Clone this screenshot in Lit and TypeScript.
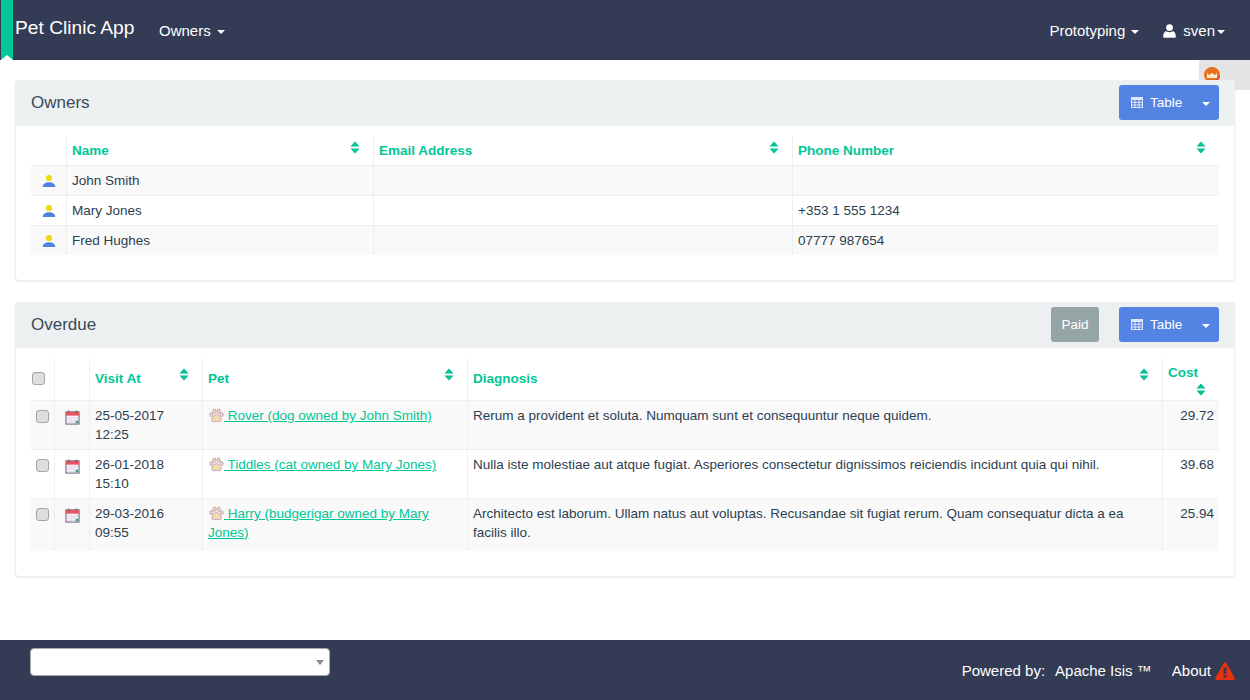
import { LitElement, html, css, svg } from "lit";
import { customElement } from "lit/decorators.js";

const sort = svg`<svg class="sort" width="10" height="14" viewBox="0 0 10 14"><path d="M5 0.5 9.5 5.6H.5Z M.5 7.4H9.5L5 12.5Z" fill="#00b98d"/><path d="M5 1.5 8 5H2Z M2 8H8L5 11.5Z" fill="#02c796"/></svg>`;
const person = html`<svg width="14" height="14" viewBox="0 0 14 14"><circle cx="7" cy="4" r="3.1" fill="#f0d90c"/><path d="M.8 13C.8 9.8 3.5 8.3 7 8.3S13.2 9.8 13.2 13Z" fill="#4f82e3"/></svg>`;
const cal = html`<svg width="15" height="15" viewBox="0 0 16 16"><rect x="1" y="2" width="14" height="13" fill="#f7f0f7" stroke="#5a5a6a"/><rect x="1" y="2" width="14" height="4" fill="#e8555f"/><rect x="3.5" y="0.5" width="1" height="3" fill="#5a5a6a"/><rect x="11.5" y="0.5" width="1" height="3" fill="#5a5a6a"/><path d="M3 8h2v1H3zM6 8h2v1H6zM9 8h2v1H9zM12 8h2v1h-2zM3 10.5h2v1H3zM6 10.5h2v1H6zM9 10.5h2v1H9zM3 13h2v1H3zM6 13h2v1H6zM9 13h2v1H9z" fill="#d9c4de"/><rect x="11.5" y="11.5" width="2.5" height="2.5" fill="#16a37f"/></svg>`;
const paw = html`<svg class="paw" width="15" height="15" viewBox="0 0 15 15"><g fill="#f2dfa8" stroke="#c5a0c0" stroke-width="1"><ellipse cx="2.3" cy="6.6" rx="1.5" ry="2"/><ellipse cx="5.4" cy="3.2" rx="1.6" ry="2.2"/><ellipse cx="9.6" cy="3.2" rx="1.6" ry="2.2"/><ellipse cx="12.7" cy="6.6" rx="1.5" ry="2"/><path d="M7.5 6.6C5.2 6.6 3.2 9.7 2.8 11.6 2.5 13.3 4 14 5.2 13.6 6.5 13.2 8.5 13.2 9.8 13.6 11 14 12.5 13.3 12.2 11.6 11.8 9.7 9.8 6.6 7.5 6.6Z"/></g></svg>`;
const tableIcon = html`<svg width="12" height="11" viewBox="0 0 12 11"><path fill-rule="evenodd" fill="#dfe8fb" d="M0 0H12V11H0ZM1 3V4.8H3.5V3ZM4.5 3V4.8H7.5V3ZM8.5 3V4.8H11V3ZM1 5.8V7.5H3.5V5.8ZM4.5 5.8V7.5H7.5V5.8ZM8.5 5.8V7.5H11V5.8ZM1 8.5V10H3.5V8.5ZM4.5 8.5V10H7.5V8.5ZM8.5 8.5V10H11V8.5Z"/></svg>`;

const visits = [
  ["25-05-2017", "12:25", "Rover (dog owned by John Smith)", "Rerum a provident et soluta. Numquam sunt et consequuntur neque quidem.", "29.72"],
  ["26-01-2018", "15:10", "Tiddles (cat owned by Mary Jones)", "Nulla iste molestiae aut atque fugiat. Asperiores consectetur dignissimos reiciendis incidunt quia qui nihil.", "39.68"],
  ["29-03-2016", "09:55", "Harry (budgerigar owned by Mary Jones)", "Architecto est laborum. Ullam natus aut voluptas. Recusandae sit fugiat rerum. Quam consequatur dicta a ea facilis illo.", "25.94"],
];
const owners = [["John Smith", ""], ["Mary Jones", "+353 1 555 1234"], ["Fred Hughes", "07777 987654"]];

@customElement("app-root")
export class AppRoot extends LitElement {
  static styles = css`
    :host { display: flex; flex-direction: column; height: 700px; font-family: "Liberation Sans", Arial, sans-serif; font-size: 13.5px; line-height: 20px; color: #2c3e50; background: #fff; position: relative; overflow: hidden; }
    .nav { height: 60px; flex: none; background: #343b55; color: #fff; display: flex; align-items: center; position: relative; padding: 0 25px 0 15px; }
    .ribbon { position: absolute; left: 1px; top: 0; width: 12px; height: 60px; background: #00c796; }
    .ribbon::after { content: ""; position: absolute; left: 0; bottom: 0; border: 6px solid transparent; border-top-width: 0; border-bottom: 5px solid #fff; }
    .brand { font-size: 19.2px; line-height: 24px; margin-top: -4px; width: 144px; flex: none; }
    .navlink { font-size: 15px; display: flex; align-items: center; margin-top: 2px; }
    .caret { display: inline-block; border-top: 4px solid currentColor; border-left: 4px solid transparent; border-right: 4px solid transparent; margin-left: 6px; margin-top: 2px; }
    .spacer { flex: 1; }
    .user { margin-left: 24px; gap: 7px; }
    .user .caret { margin-left: -5px; }
    .flag { position: absolute; right: 0; top: 60px; width: 51px; height: 30px; background: #e4e4e4; }
    .flag svg { position: absolute; left: 5px; top: 7px; }
    main { flex: 1; padding: 20px 15px 0; position: relative; }
    .panel { background: #fff; border: 1px solid #ecf0f1; border-radius: 4px; box-shadow: 0 1px 2px rgba(0,0,0,.08); margin-bottom: 21px; position: relative; padding-bottom: 25px; }
    .head { height: 46px; box-sizing: border-box; background: #ecf0f1; display: flex; align-items: center; justify-content: flex-end; padding: 0 16px 1px; margin: -1px -1px 0; border-radius: 4px 4px 0 0; gap: 20px; }
    .title { flex: 1; font-size: 17px; color: #3a4a5a; }
    .btn { height: 35px; border-radius: 3px; color: #fff; display: flex; align-items: center; font-size: 13.5px; }
    .paid { background: #95a5a6; width: 48px; justify-content: center; font-weight: normal; }
    .tb { background: #5383e3; width: 100px; padding-left: 12px; box-sizing: border-box; gap: 7px; }
    .tb .caret { margin-left: 13px; }
    .body { padding: 10px 15px 0; }
    table { border-collapse: collapse; table-layout: fixed; width: 1188px; }
    th { color: #00c796; font-weight: bold; text-align: left; padding: 5px 5px 4px 5.5px; vertical-align: bottom; border-left: 1px solid #ecf0f1; border-bottom: 1px solid #ecf0f1; position: relative; }
    td { padding: 5px 5px 4px 5.5px; vertical-align: top; border-left: 1px solid #ecf0f1; border-top: 1px solid #ecf0f1; }
    th:first-child, td:first-child { border-left: none; }
    tbody tr:nth-child(odd) td { background: #f9f9f9; }
    tbody tr:nth-child(even) td { background: #fff; }
    .owners th { height: 20px; }
    .owners td { height: 20px; }
    .sort { position: absolute; right: 13px; top: 5px; }
    .icon { text-align: center; }
    .owners td.icon { padding: 8px 0 0 1px; }
    .icon svg { display: block; margin: 0 auto; }
    .overdue th { padding-top: 11px; padding-bottom: 11px; vertical-align: top; }
    .overdue th .sort { top: 10px; }
    .overdue .cost { padding-top: 5px; padding-bottom: 1px; }
    .overdue .cost .sort { position: static; display: block; margin: 0 8px 0 auto; }
    .overdue td { padding: 5px 5px 5px 5.5px; line-height: 19px; }
    .overdue td.pet { padding-bottom: 9px; }
    .num { text-align: right; }
    a { color: #00c796; text-decoration: underline; }
    .paw { vertical-align: -3px; margin-left: 1px; }
    .check { width: 13px; height: 13px; box-sizing: border-box; background: #dedede; border: 1px solid #a5a5a5; border-radius: 3px; display: block; margin: 0 auto; }
    .overdue th.checkcell { padding: 14px 0 0 1px; }
    .overdue th.checkcell .check { margin: 0; }
    .overdue td.checkcell { padding: 9px 0 0; }
    .overdue td.calcell { padding: 9px 0 0 1px; text-align: center; }
    .calcell svg { display: block; margin: 0 auto; }
    footer { height: 60px; flex: none; background: #343b55; color: #fff; display: flex; align-items: center; padding: 0 15px 0 30px; }
    .select { width: 300px; height: 28px; box-sizing: border-box; background: #fff; border: 1px solid #aaa; border-radius: 4px; position: relative; margin-top: -16px; }
    .select::after { content: ""; position: absolute; right: 5px; top: 11px; border-top: 5px solid #888; border-left: 4px solid transparent; border-right: 4px solid transparent; }
    .foot { font-size: 15px; display: flex; align-items: center; margin-top: 2px; }
    .foot span { white-space: pre; }
    .isis { margin-left: 10px; }
    .about { margin-left: 20px; margin-right: 4px; }
  `;

  render() {
    return html`
      <header class="nav">
        <div class="ribbon"></div>
        <div class="brand">Pet Clinic App</div>
        <div class="navlink">Owners<i class="caret"></i></div>
        <div class="spacer"></div>
        <div class="navlink">Prototyping<i class="caret"></i></div>
        <div class="navlink user">
          <svg width="13" height="14" viewBox="0 0 13 14"><circle cx="6.5" cy="3.6" r="3.4" fill="#fff"/><path d="M1 13.8Q.2 13.8.2 12.4C.2 9.3 1.5 7.3 3.4 7.3Q6.5 9.3 9.6 7.3C11.5 7.3 12.8 9.3 12.8 12.4Q12.8 13.8 12 13.8Z" fill="#fff"/></svg>
          sven<i class="caret"></i>
        </div>
      </header>
      <div class="flag"><svg width="16" height="16" viewBox="0 0 16 16"><circle cx="8" cy="8" r="8" fill="#e9701f"/><path d="M8 16A8 8 0 0 0 16 8L12 12Z" fill="#e0443a"/><path d="M3 6 5 8 8 6 11 8 13 6V11H3Z" fill="#fbe9d0"/></svg></div>
      <main>
        <section class="panel">
          <div class="head"><div class="title">Owners</div>
            <div class="btn tb">${tableIcon}Table<i class="caret"></i></div></div>
          <div class="body">
            <table class="owners">
              <colgroup><col style="width:35px"/><col style="width:307px"/><col style="width:419px"/><col/></colgroup>
              <thead><tr><th></th><th>Name${sort}</th><th>Email Address${sort}</th><th>Phone Number${sort}</th></tr></thead>
              <tbody>${owners.map(o => html`<tr><td class="icon">${person}</td><td>${o[0]}</td><td></td><td>${o[1]}</td></tr>`)}</tbody>
            </table>
          </div>
        </section>
        <section class="panel">
          <div class="head"><div class="title">Overdue</div>
            <div class="btn paid">Paid</div>
            <div class="btn tb">${tableIcon}Table<i class="caret"></i></div></div>
          <div class="body">
            <table class="overdue">
              <colgroup><col style="width:23px"/><col style="width:35px"/><col style="width:113px"/><col style="width:265px"/><col style="width:695px"/><col/></colgroup>
              <thead><tr><th class="checkcell"><i class="check"></i></th><th></th><th>Visit At${sort}</th><th>Pet${sort}</th><th>Diagnosis${sort}</th><th class="cost">Cost${sort}</th></tr></thead>
              <tbody>${visits.map(v => html`<tr>
                <td class="checkcell"><i class="check"></i></td>
                <td class="calcell">${cal}</td>
                <td>${v[0]}<br/>${v[1]}</td>
                <td class="pet"><a href="#">${paw} ${v[2]}</a></td>
                <td>${v[3]}</td>
                <td class="num">${v[4]}</td>
              </tr>`)}</tbody>
            </table>
          </div>
        </section>
      </main>
      <footer>
        <div class="select"></div>
        <div class="spacer"></div>
        <div class="foot"><span>Powered by:</span><span class="isis">Apache Isis ™</span><span class="about">About</span>
          <svg width="20" height="18" viewBox="0 0 20 18"><path d="M10 0Q10.8 0 11.3 1L19.6 15.8Q20.3 17.6 18.6 18H1.4Q-.3 17.6.4 15.8L8.7 1Q9.2 0 10 0Z" fill="#e8310e"/><rect x="8.6" y="5.5" width="2.8" height="6.5" fill="#343b55"/><rect x="8.6" y="13" width="2.8" height="2.8" fill="#343b55"/></svg>
        </div>
      </footer>
    `;
  }
}
